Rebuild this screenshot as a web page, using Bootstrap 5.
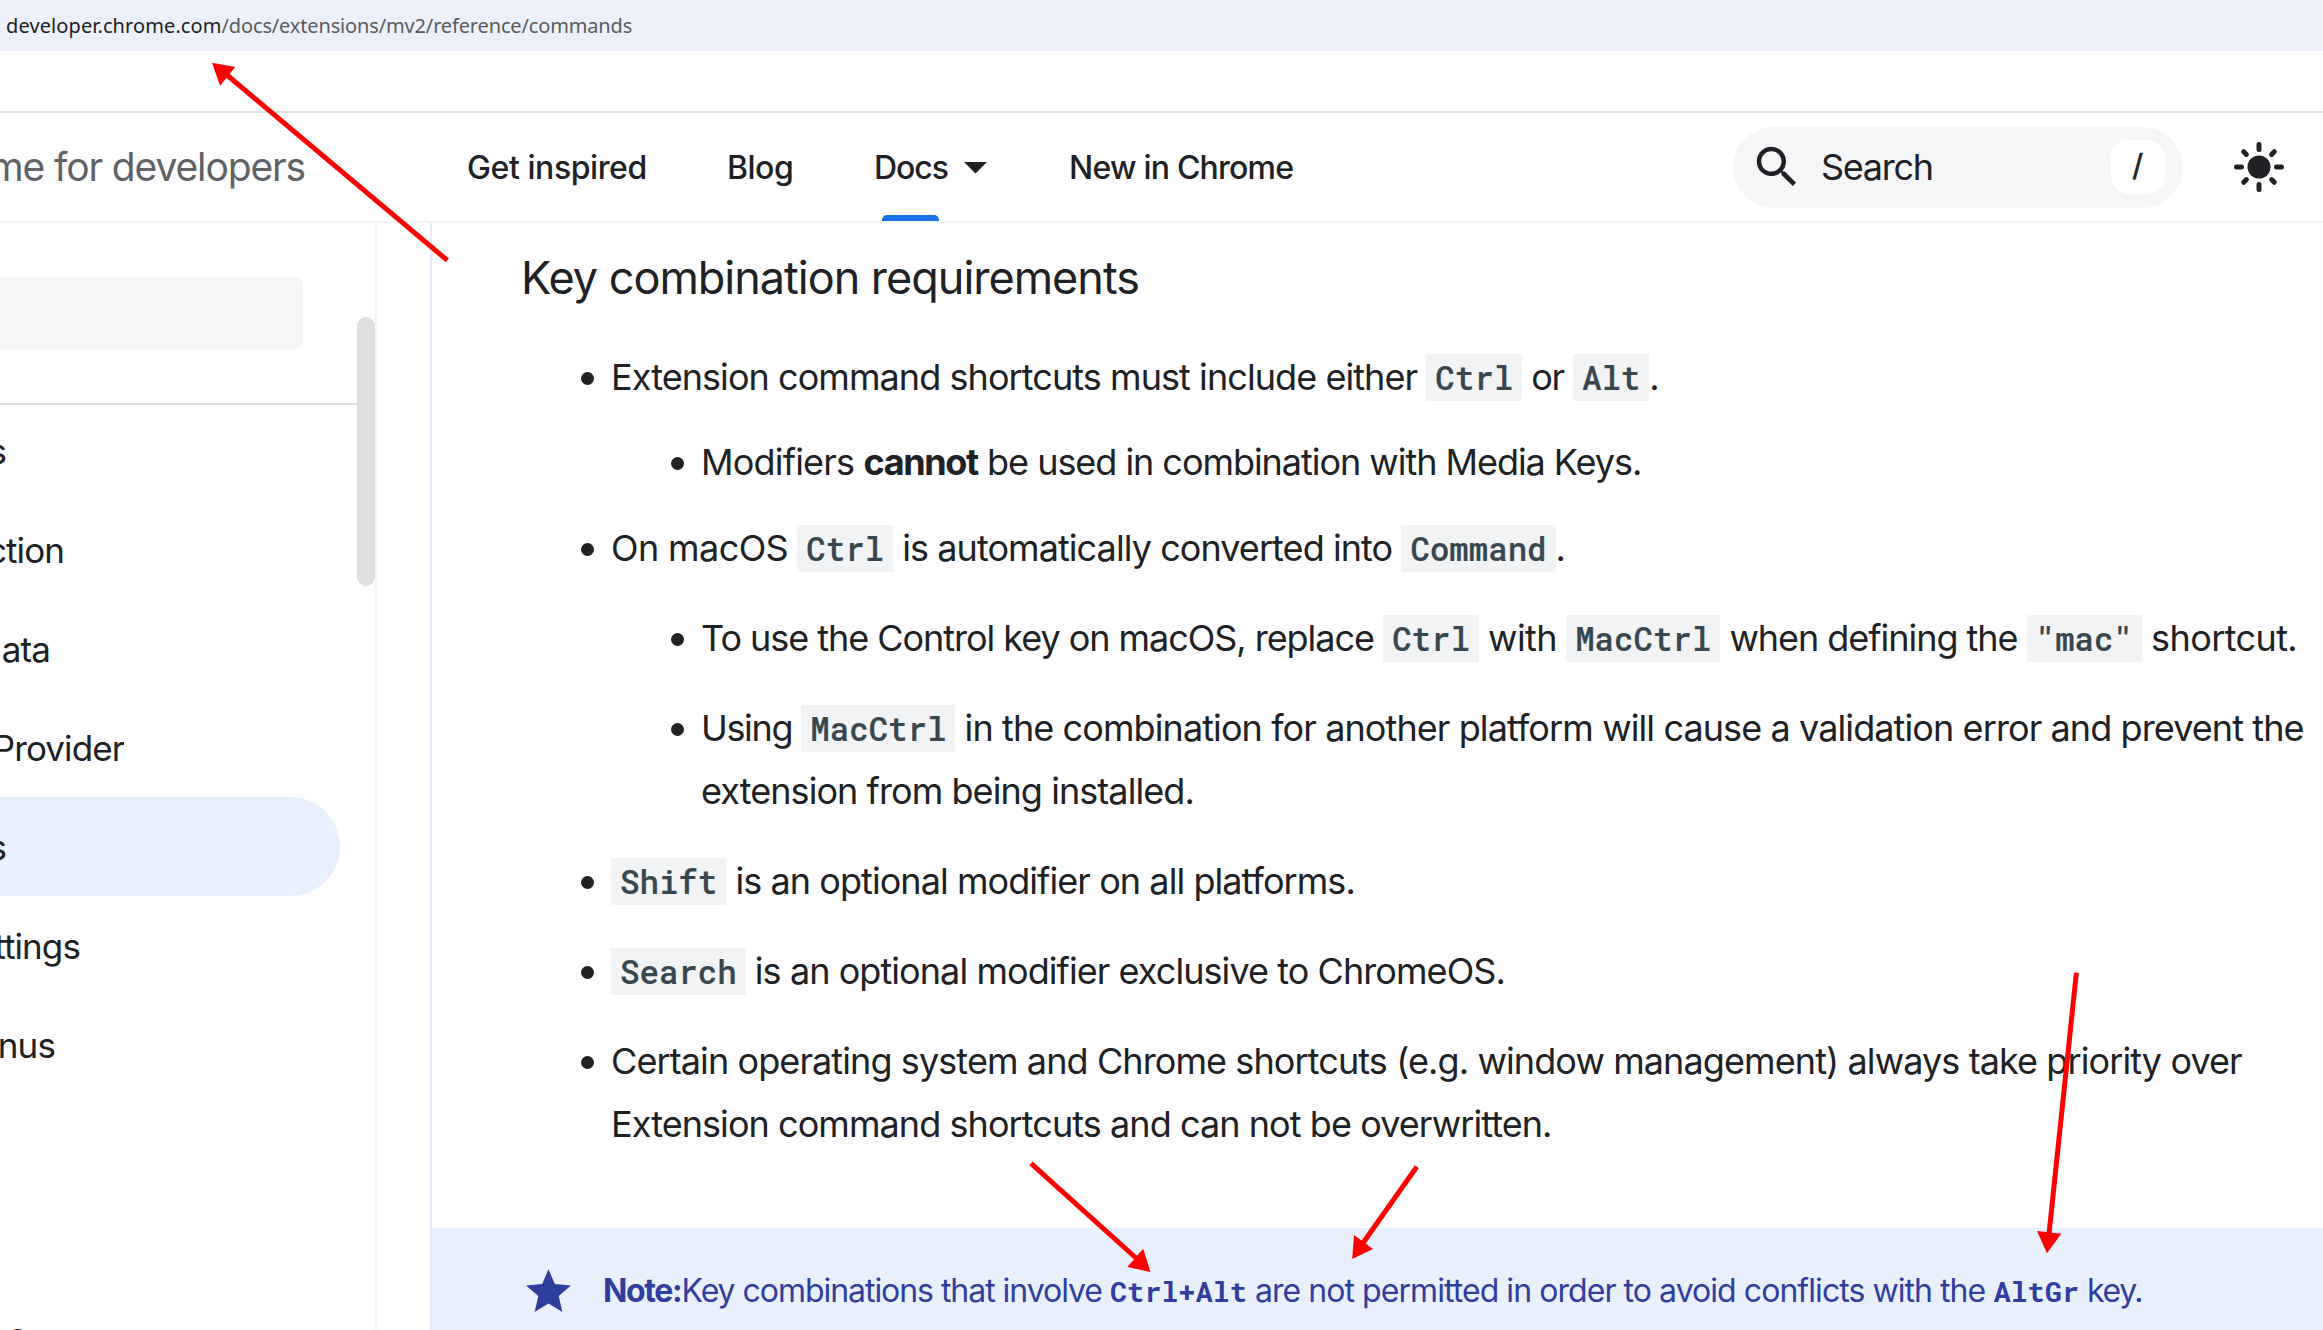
<!DOCTYPE html>
<html lang="en">
<head>
<meta charset="utf-8">
<meta name="viewport" content="width=device-width, initial-scale=1">
<title>chrome.commands</title>
<link href="https://cdn.jsdelivr.net/npm/bootstrap@5.3.0/dist/css/bootstrap.min.css" rel="stylesheet">
<style>
  body { font-family: Inter, "Open Sans", sans-serif; color: #202124; background: #fff; width: 2323px; height: 1330px; overflow: hidden; }
  .url-bar { height: 51px; background: #ecf0fa; font: 20px/51px "Noto Sans", sans-serif; color: #5a5b5e; padding-left: 6px; }
  .url-host { color: #202124; letter-spacing: .1px; }
  .url-path { letter-spacing: -.15px; }
  .blank-strip { height: 62px; border-bottom: 2px solid #dfe0e1; }
  .site-header { height: 110px; border-bottom: 2px solid #f1f3f4; }
  .brand { width: 305px; margin-right: 162px; font-size: 39px; letter-spacing: -1.13px; color: #5f6368; overflow: hidden; }
  .top-nav { font-size: 32px; font-weight: 500; letter-spacing: -.6px; }
  .top-nav .nav-link { color: #202124; padding: 2px 0 0; }
  .tab-inspired { width: 260px; letter-spacing: -.42px; }
  .tab-blog { width: 147px; letter-spacing: -.5px; }
  .tab-docs { width: 195px; letter-spacing: -1.03px; }
  .tab-new { width: 240px; letter-spacing: -.78px; }
  .tab-docs svg { margin-left: 16px; }
  .tab-mark { left: 8px; bottom: 0; width: 57px; height: 6px; background: #1a73e8; border-radius: 5px 5px 0 0; }
  .search-pill { width: 450px; height: 81px; background: #f4f6f8; margin-right: 41px; padding: 0 18px 0 17px; font-size: 36px; letter-spacing: -1.3px; }
  .search-pill .search-label { margin-left: 17px; }
  .slash-key { width: 54px; height: 54px; border-radius: 18px; font-size: 30px; padding: 0 2px 3px 0; -webkit-text-stroke: .6px; }
  .theme-btn { margin-right: 29px; }
  .page-body { height: 1107px; }
  .side { width: 377px; border-right: 2px solid #f4f5f6; }
  .side-list { width: 357px; padding-top: 54px; }
  .side-filter { width: 303px; height: 72px; background: #f4f5f7; border-radius: 0 8px 8px 0; }
  .side-rule { margin-top: 54px; height: 2px; background: #dadce0; margin-bottom: -4px; }
  .side-item { height: 99px; font-size: 35px; letter-spacing: -.9px; padding-top: 2px; }
  .side-item span { overflow: hidden; }
  .side-item.current { width: 340px; background: #e8f0fe; border-radius: 0 50px 50px 0; }
  .w-s { width: 6px; } .w-ction { width: 64px; } .w-data { width: 50px; } .w-prov { width: 124px; }
  .w-set { width: 80px; } .w-nus { width: 55px; } .w-c { width: 28px; }
  .side-thumb { width: 18px; height: 269px; margin-top: 94px; background: #dedfe1; border-radius: 9px; }
  .article { margin-left: 53px; border-left: 2px solid #e4ebfa; }
  .article h3 { font-size: 45px; line-height: 60px; letter-spacing: -1.01px; font-weight: 400; margin: 25px 0 0 89px; }
  .doc-list { font-size: 36px; line-height: 63px; letter-spacing: -.93px; white-space: nowrap; margin: 38px 0 0 149px; }
  .doc-list li { display: flex; margin-bottom: 27px; }
  .doc-list li::before { content: ""; flex: none; width: 13px; height: 13px; border-radius: 50%; background: #202124; margin: 26px 17px 0 0; }
  .doc-list li.nested { margin-left: 90px; }
  .doc-list li.tight { margin-bottom: 22px; }
  .doc-list li.tight2 { margin-bottom: 23px; }
  .doc-list code { font: 500 32.4px/1 "Roboto Mono", "Liberation Mono", monospace; letter-spacing: 0; color: #37474f; background: #f1f3f4; padding: 2px 9px; -webkit-text-stroke: .2px #37474f; }
  .ls-b { letter-spacing: -.6px; } .ls-c { letter-spacing: -.8px; } .ls-d { letter-spacing: -1.04px; } .ls-e { letter-spacing: -1.35px; }
  .ls-f { letter-spacing: -.9px; }
  .note { height: 104px; background: #e8f0fe; color: #303f9f; font-size: 32px; line-height: 56px; letter-spacing: -.94px; padding: 35px 0 0 94px; margin-top: 72px; white-space: nowrap; }
  .note code { font: bold 28.5px/1 "Roboto Mono", "Liberation Mono", monospace; letter-spacing: 0; color: #303f9f; }
  .note svg { margin: 6px 32px 0 0; flex: none; }
  .arrows { left: 0; top: 0; }
</style>
</head>
<body>
<div class="url-bar"><span class="url-host">developer.chrome.com</span><span class="url-path">/docs/extensions/mv2/reference/commands</span></div>
<div class="blank-strip"></div>

<header class="site-header d-flex align-items-center">
  <div class="brand d-flex justify-content-end text-nowrap"><span>me for developers</span></div>
  <nav class="top-nav nav flex-nowrap align-self-stretch text-nowrap">
    <a class="nav-link d-flex align-items-center tab-inspired" href="#">Get inspired</a>
    <a class="nav-link d-flex align-items-center tab-blog" href="#">Blog</a>
    <a class="nav-link d-flex align-items-center tab-docs position-relative" href="#">Docs
      <svg width="23" height="12" viewBox="0 0 23 12"><path d="M0 0h23L11.500 11.500z" fill="#202124"/></svg>
      <span class="tab-mark position-absolute"></span>
    </a>
    <a class="nav-link d-flex align-items-center tab-new" href="#">New in Chrome</a>
  </nav>
  <div class="search-pill rounded-pill d-flex align-items-center ms-auto">
    <svg width="54" height="54" viewBox="0 0 24 24"><path fill="#202124" d="M15.500 14h-.79l-.28-.27A6.470 6.470 0 0 0 16 9.500 6.500 6.500 0 1 0 9.500 16c1.610 0 3.090-.59 4.230-1.570l.27.28v.79l5 4.990L20.490 19l-4.990-5zm-6 0C7.010 14 5 11.990 5 9.500S7.010 5 9.500 5 14 7.010 14 9.500 11.990 14 9.500 14z"/></svg>
    <span class="search-label">Search</span>
    <span class="slash-key bg-white ms-auto d-flex align-items-center justify-content-center">/</span>
  </div>
  <svg class="theme-btn" width="70" height="54" viewBox="-35 -27 70 54" aria-label="Theme">
    <circle r="11.500" fill="#202124"/>
    <g stroke="#202124" stroke-width="5" stroke-linecap="round">
      <path d="M0-22.500V-17.500M0 22.500V17.500M-22.500 0H-17.500M22.500 0H17.500M-15.300-15.300l2.700 2.700M15.300-15.300l-2.700 2.700M-15.300 15.300l2.700-2.700M15.300 15.300l-2.700-2.700"/>
    </g>
  </svg>
</header>

<div class="page-body d-flex">
  <aside class="side d-flex flex-shrink-0">
    <div class="side-list flex-shrink-0">
      <div class="side-filter"></div>
      <div class="side-rule"></div>
      <div class="side-item d-flex align-items-center"><span class="w-s d-flex justify-content-end">s</span></div>
      <div class="side-item d-flex align-items-center"><span class="w-ction d-flex justify-content-end">ction</span></div>
      <div class="side-item d-flex align-items-center"><span class="w-data d-flex justify-content-end">ata</span></div>
      <div class="side-item d-flex align-items-center"><span class="w-prov d-flex justify-content-end">Provider</span></div>
      <div class="side-item current d-flex align-items-center"><span class="w-s d-flex justify-content-end">s</span></div>
      <div class="side-item d-flex align-items-center"><span class="w-set d-flex justify-content-end">ttings</span></div>
      <div class="side-item d-flex align-items-center"><span class="w-nus d-flex justify-content-end">nus</span></div>
      <div class="side-item"></div>
      <div class="side-item"></div>
      <div class="side-item d-flex align-items-center"><span class="w-c d-flex justify-content-end">S</span></div>
    </div>
    <div class="side-thumb flex-shrink-0"></div>
  </aside>

  <main class="article flex-grow-1">
    <h3>Key combination requirements</h3>
    <ul class="doc-list list-unstyled">
      <li class="tight"><div>Extension command shortcuts must include either <code>Ctrl</code> <span class="ls-e">or</span> <code>Alt</code>.</div></li>
      <li class="tight2 nested"><div><span class="ls-c">Modifiers</span> <b class="ls-e">cannot</b> <span class="ls-d">be used in combination with Media Keys.</span></div></li>
      <li><div><span class="ls-b">On macOS</span> <code>Ctrl</code> is automatically converted into <code>Command</code>.</div></li>
      <li class="nested"><div><span class="ls-d">To use the Control key on macOS, replace</span> <code>Ctrl</code> <span class="ls-b">with</span> <code>MacCtrl</code> <span class="ls-d">when defining the</span> <code>"mac"</code> <span class="ls-b">shortcut.</span></div></li>
      <li class="nested"><div><span class="ls-e">Using</span> <code>MacCtrl</code> <span class="ls-f">in the combination for another platform will cause a validation error and prevent the</span><br>extension from being installed.</div></li>
      <li><div><code>Shift</code> is an optional modifier on all platforms.</div></li>
      <li><div><code>Search</code> is an optional modifier exclusive to ChromeOS.</div></li>
      <li><div><span class="ls-f">Certain operating system and Chrome shortcuts (e.g. window management) always take priority over</span><br>Extension command shortcuts and can not be overwritten.</div></li>
    </ul>
    <div class="note d-flex align-items-start">
      <svg width="45" height="43" viewBox="0 0 20 19"><path fill="#303f9f" d="M10 15.270 16.180 19l-1.640-7.030L20 7.240l-7.190-.61L10 0 7.190 6.630 0 7.240l5.460 4.730L3.820 19z"/></svg>
      <div><b class="ls-e">Note:</b><span class="ls-d">Key combinations that involve</span> <code>Ctrl+Alt</code> <span class="ls-g">are not permitted in order to avoid conflicts with the</span> <code>AltGr</code> <span class="ls-e">key.</span></div>
    </div>
  </main>
</div>

<!-- annotation arrows drawn over the page -->
<svg class="arrows position-absolute" width="2323" height="1330" viewBox="0 0 2323 1330" fill="#f00" stroke="#f00" stroke-width="5">
  <path d="M447.300 260.300 227 75M1031 1163.300 1136 1258M1416.800 1166.700 1363 1243M2076.400 972.700 2049 1234" fill="none"/>
  <path stroke="none" d="M212 62.700 235.300 67 220 85.700zM1150.500 1272 1143.200 1248.700 1127.300 1267zM1352.200 1259 1354 1235 1373 1249zM2047 1253.300 2037 1231 2061.300 1233.700z"/>
</svg>
<script src="https://cdn.jsdelivr.net/npm/bootstrap@5.3.0/dist/js/bootstrap.bundle.min.js"></script>
</body>
</html>
